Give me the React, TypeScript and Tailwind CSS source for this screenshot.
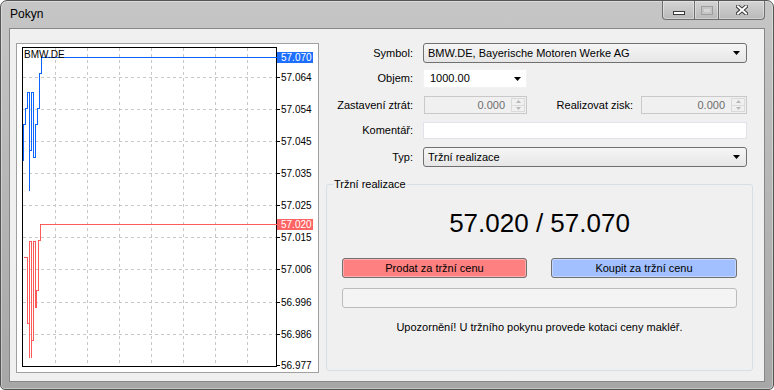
import React from "react";

const gridY = [77, 109, 141, 173, 205, 237, 269, 302, 334];
const gridX = [55, 87, 119, 151, 183, 215, 247];
const axis: [string, number][] = [
  ["57.064", 77],
  ["57.054", 109],
  ["57.045", 141],
  ["57.035", 173],
  ["57.025", 205],
  ["57.015", 237],
  ["57.006", 269],
  ["56.996", 302],
  ["56.986", 334],
  ["56.977", 365],
];

function Arrow() {
  return (
    <svg width="7" height="4" viewBox="0 0 7 4" className="shrink-0">
      <path d="M0 0h7L3.5 4z" fill="#000" />
    </svg>
  );
}

function Spin({ className }: { className: string }) {
  return (
    <div className={"flex h-[18px] border border-[#c9c9c9] bg-[#f0f0f0] " + className}>
      <div className="flex flex-1 items-center justify-end pr-[6px] text-[11px] text-[#6d6d6d]">0.000</div>
      <div className="my-[1px] mr-[1px] flex w-[14px] flex-col border border-[#dadada]">
        <div className="flex flex-1 items-center justify-center border-b border-[#dadada]">
          <svg width="5" height="3" viewBox="0 0 5 3">
            <path d="M0 3h5L2.5 0z" fill="#b8b8b8" />
          </svg>
        </div>
        <div className="flex flex-1 items-center justify-center">
          <svg width="5" height="3" viewBox="0 0 5 3">
            <path d="M0 0h5L2.5 3z" fill="#b8b8b8" />
          </svg>
        </div>
      </div>
    </div>
  );
}

function Chart() {
  const blue =
    "M23 160 V124 H25 V108 H27 V92 H29 V190 V150 H31 V92 H33 V157 H35 V124 H37 V108 H39 V73 H41 V57 H276";
  const red =
    "M23 257 H27 V323 H29 V357 V241 H31 V357 V340 H33 V241 H35 V307 H36 V290 H38 V240 H40 V224 H276";
  return (
    <svg width="301" height="328" viewBox="17 44 301 328" className="block">
      <rect x="17" y="44" width="301" height="328" fill="#fff" />
      {gridX.map((x) => (
        <line key={x} x1={x + 0.5} y1="48" x2={x + 0.5} y2="366" stroke="#c8c8c8" strokeDasharray="3 3" />
      ))}
      {gridY.map((y) => (
        <line key={y} x1="23" y1={y + 0.5} x2="276" y2={y + 0.5} stroke="#c8c8c8" strokeDasharray="3 3" />
      ))}
      <rect x="22.5" y="47.5" width="254" height="319" fill="none" stroke="#000" />
      <g transform="translate(0.5 0.5)" fill="none" shapeRendering="crispEdges">
        <path d={blue} stroke="#0a64ff" />
        <path d={red} stroke="#ff5a5a" />
      </g>
      <text x="24" y="58" fontSize="10" fill="#000" fontFamily="Liberation Sans, Arial, sans-serif">
        BMW.DE
      </text>
      {axis.map(([t, y]) => (
        <g key={t}>
          <line x1="277" y1={y + 0.5} x2="280" y2={y + 0.5} stroke="#000" />
          <text x="281" y={y + 4} fontSize="10" fill="#000" fontFamily="Liberation Sans, Arial, sans-serif">
            {t}
          </text>
        </g>
      ))}
      <rect x="277" y="52" width="36" height="11" fill="#1e6fff" />
      <text x="281" y="61" fontSize="10" fill="#fff" fontFamily="Liberation Sans, Arial, sans-serif">
        57.070
      </text>
      <rect x="277" y="219" width="36" height="11" fill="#ff6464" />
      <text x="281" y="228" fontSize="10" fill="#fff" fontFamily="Liberation Sans, Arial, sans-serif">
        57.020
      </text>
    </svg>
  );
}

export default function App() {
  return (
    <div className="h-[390px] w-[774px] bg-white font-['Liberation_Sans',Arial,sans-serif] text-black">
      <div className="flex h-[390px] w-[774px] flex-col rounded-t-[7px] rounded-b-[5px] border border-[#555] bg-gradient-to-b from-[#c6c6c6] via-[#b6b6b6] to-[#a7a7a7] shadow-[inset_0_0_0_1px_rgba(255,255,255,0.35)]">
        {/* title bar */}
        <div className="flex h-[27px] items-start justify-between">
          <div className="pl-[9px] pt-[6px] text-[12px] leading-[14px]">Pokyn</div>
          <div className="mr-[8px] flex h-[19px]">
            <div className="flex w-[33px] items-center justify-center rounded-bl-[4px] border border-t-0 border-[#6f6f6f] bg-gradient-to-b from-[#d4d4d4] to-[#b9b9b9] shadow-[inset_0_0_0_1px_rgba(255,255,255,0.35)]">
              <div className="mt-[6px] h-[4px] w-[12px] border border-[#3a3a3a] bg-white" />
            </div>
            <div className="flex w-[24px] items-center justify-center border-b border-r border-[#6f6f6f] bg-gradient-to-b from-[#d4d4d4] to-[#b9b9b9] shadow-[inset_0_0_0_1px_rgba(255,255,255,0.35)]">
              <div className="h-[9px] w-[12px] border border-[#9e9e9e] bg-[#d6d6d6] shadow-[inset_0_0_0_2px_#c4c4c4]" />
            </div>
            <div className="flex w-[46px] items-center justify-center rounded-br-[4px] border-b border-r border-[#6f6f6f] bg-gradient-to-b from-[#d4d4d4] to-[#b9b9b9] shadow-[inset_0_0_0_1px_rgba(255,255,255,0.35)]">
              <svg width="12" height="10" viewBox="0 0 12 10">
                <path d="M2 1.5l8 7M10 1.5l-8 7" stroke="#3a3a3a" strokeWidth="4" strokeLinecap="square" />
                <path d="M2 1.5l8 7M10 1.5l-8 7" stroke="#fff" strokeWidth="2" strokeLinecap="square" />
              </svg>
            </div>
          </div>
        </div>

        {/* client area */}
        <div className="mx-[8px] flex h-[354px] border border-[#878787] bg-[#f0f0f0]">
          <div className="ml-[6px] mt-[14px] h-[330px] w-[303px] border border-[#a0a0a0] bg-white">
            <Chart />
          </div>

          <div className="ml-[7px] mt-[14px] flex w-[427px] flex-col text-[11px]">
            <div className="flex h-[20px] items-center pr-[6px]">
              <div className="w-[87px] text-right">Symbol:</div>
              <div className="ml-[10px] flex h-[20px] flex-1 items-center justify-between rounded-[3px] border border-[#707070] bg-gradient-to-b from-[#f6f6f6] to-[#e6e6e6] pl-[4px] pr-[6px]">
                <span>BMW.DE, Bayerische Motoren Werke AG</span>
                <Arrow />
              </div>
            </div>

            <div className="mt-[6px] flex h-[19px] items-center">
              <div className="w-[87px] text-right">Objem:</div>
              <div className="ml-[10px] flex h-[19px] w-[104px] items-center justify-between border border-[#f2f2f2] bg-white pl-[6px] pr-[5px]">
                <span>1000.00</span>
                <Arrow />
              </div>
            </div>

            <div className="mt-[8px] flex h-[18px] items-center pr-[6px]">
              <div className="w-[87px] text-right">Zastavení ztrát:</div>
              <Spin className="ml-[11px] w-[103px]" />
              <div className="flex-1 pr-[8px] text-right">Realizovat zisk:</div>
              <Spin className="w-[106px]" />
            </div>

            <div className="mt-[8px] flex h-[17px] items-center pr-[6px]">
              <div className="w-[87px] text-right">Komentář:</div>
              <div className="ml-[10px] h-[17px] flex-1 border border-[#e2e3ea] bg-white" />
            </div>

            <div className="mt-[8px] flex h-[20px] items-center pr-[6px]">
              <div className="w-[87px] text-right">Typ:</div>
              <div className="ml-[10px] flex h-[20px] flex-1 items-center justify-between rounded-[3px] border border-[#707070] bg-gradient-to-b from-[#f6f6f6] to-[#e6e6e6] pl-[4px] pr-[6px]">
                <span>Tržní realizace</span>
                <Arrow />
              </div>
            </div>

            <fieldset className="mt-[10px] h-[194px] rounded-[3px] border border-[#d5dfe5] px-[15px]">
              <legend className="ml-[-9px] px-[1px] text-[11px] leading-[14px]">Tržní realizace</legend>
              <div className="mt-[17px] text-center text-[26px] leading-[30px]">57.020 / 57.070</div>
              <div className="mt-[20px] flex justify-between">
                <button className="h-[20px] w-[185px] rounded-[3px] border border-[#707070] bg-[#ff8080] text-[11px] shadow-[inset_0_0_0_1px_rgba(255,255,255,0.35)]">
                  Prodat za tržní cenu
                </button>
                <button className="h-[20px] w-[186px] rounded-[3px] border border-[#707070] bg-[#a2c0ff] text-[11px] shadow-[inset_0_0_0_1px_rgba(255,255,255,0.35)]">
                  Koupit za tržní cenu
                </button>
              </div>
              <div className="mt-[10px] h-[20px] rounded-[3px] border border-[#bcbcbc] bg-[#f4f4f4]" />
              <div className="mt-[12px] text-center text-[11px] leading-[14px]">
                Upozornění! U tržního pokynu provede kotaci ceny makléř.
              </div>
            </fieldset>
          </div>
        </div>
      </div>
    </div>
  );
}
